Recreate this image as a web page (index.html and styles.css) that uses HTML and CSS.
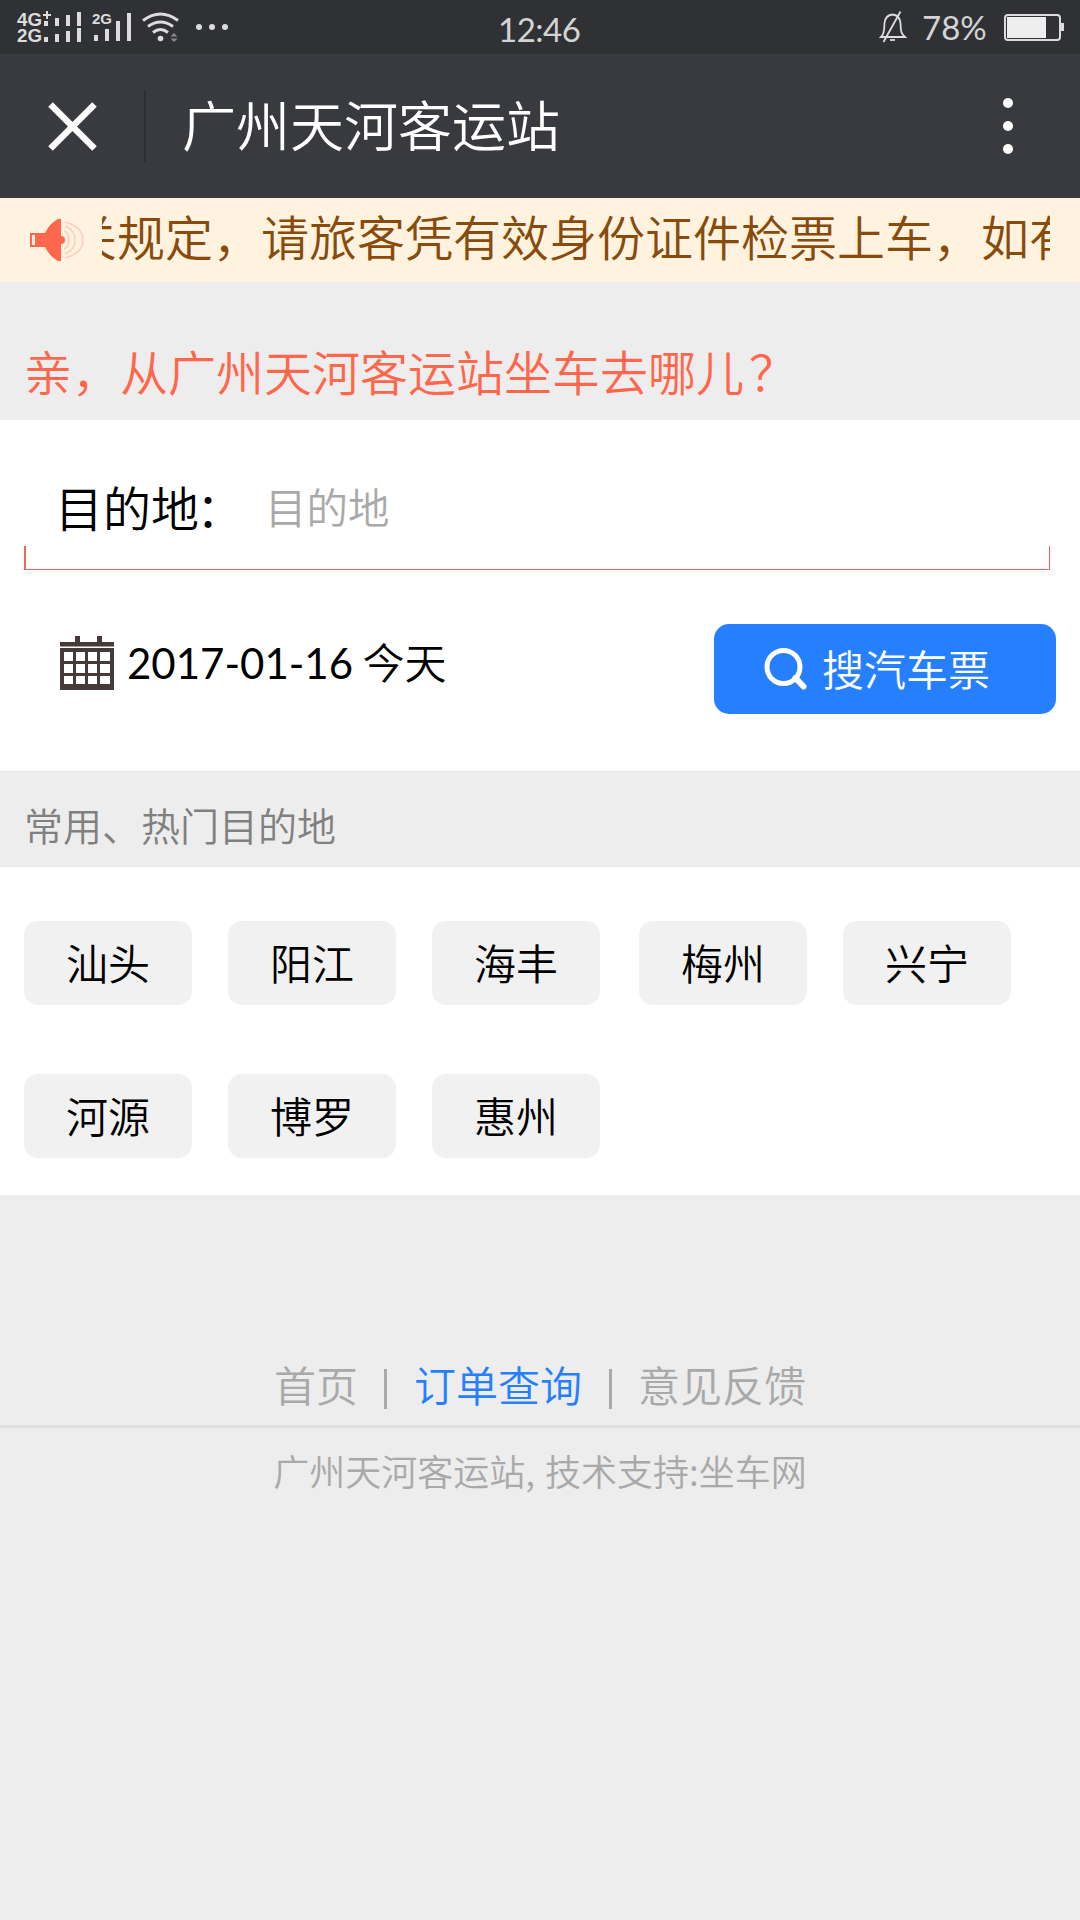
FILE: index.html
```html
<!DOCTYPE html>
<html lang="zh-CN">
  <head>
    <meta charset="utf-8">
    <title>广州天河客运站</title>
    <link rel="stylesheet" href="styles.css">
  </head>
  <body>
    <div class="status-bar">
      <svg class="signal" width="196" height="54" viewBox="0 0 196 54" fill="#dcdcdc">
        <g font-family="Liberation Sans" font-weight="bold">
          <text x="17" y="26" font-size="18" textLength="25" lengthAdjust="spacingAndGlyphs">4G</text>
          <text x="17" y="42" font-size="18" textLength="25" lengthAdjust="spacingAndGlyphs">2G</text>
          <text x="92" y="24" font-size="15" textLength="20" lengthAdjust="spacingAndGlyphs">2G</text>
        </g>
        <path d="M43 15h8M47 11v8" stroke="#dcdcdc" stroke-width="2"/>
        <path d="M44 21h4v5h-4zM55 18h4v8h-4zM66 15h4v11h-4zM77 12h4v14h-4zM44 37h4v5h-4zM55 34h4v8h-4zM66 31h4v11h-4zM77 28h4v14h-4z"/>
        <path d="M94 35h4v6h-4zM105 29h4v12h-4zM116 21h4v20h-4zM127 13h4v28h-4z"/>
        <g fill="none" stroke="#dcdcdc" stroke-width="3">
          <path d="M143 20.500q17.500-13 35 0M148 26.500q12.500-9 25 0M153 32.500q7.500-6 15 0"/>
        </g>
        <circle cx="160.500" cy="38.500" r="2.800"/>
        <path d="M170.500 36.500h7l-3.500-3.500zM170.500 38.500h7l-3.500 3.500z" fill="#8a8a8c"/>
      </svg>
      <div class="more"><i></i><i></i><i></i></div>
      <span class="time">12:46</span>
      <svg class="bell" width="28" height="34" viewBox="0 0 28 34" fill="none" stroke="#dcdcdc" stroke-width="1.800">
        <path d="M2 27c4-4 3-8 3.500-14Q6.500 5 13.500 4.500Q20.500 5 21.500 13c.5 6-.5 10 4.500 14z"/>
        <path d="M4.500 32L21.500 1.500"/>
        <path d="M11 30h5"/>
      </svg>
      <span class="percent">78%</span>
      <div class="battery"><div class="level"></div></div>
      <div class="battery-tip"></div>
    </div>

    <div class="header">
      <svg class="close" width="49" height="49" viewBox="0 0 49 49" stroke="#fff" stroke-width="6.500">
        <path d="M2.500 2.500L46.500 46.500M46.500 2.500L2.500 46.500"/>
      </svg>
      <div class="divider"></div>
      <h1>广州天河客运站</h1>
      <div class="menu"><i></i><i></i><i></i></div>
    </div>

    <div class="notice">
      <svg width="56" height="44" viewBox="0 0 56 44">
        <path fill="#ff674c" fill-rule="evenodd" d="M0 15h15Q20 5 28 1h3v17a4 4 0 0 1 0 8v17h-3Q20 39 15 29H0zM2 17v10h3V17z"/>
        <g fill="none" stroke="#fbcdc3" stroke-width="1.600">
          <path d="M34 13q5 2 5 9t-5 9M35 8q10 4 10 14t-10 14M35 4q18 5 18 18T35 40"/>
        </g>
      </svg>
      <div class="scroll"><p>关规定，请旅客凭有效身份证件检票上车，如有</p></div>
    </div>

    <h2 class="question">亲，从广州天河客运站坐车去哪儿<span>？</span></h2>

    <div class="search">
      <div class="field">
        <label for="dest">目的地<span>：</span></label>
        <input type="text" id="dest" placeholder="目的地">
      </div>
      <div class="field-line"></div>
      <div class="search-row">
        <svg width="54" height="54" viewBox="0 0 54 54">
          <path fill="#463b39" fill-rule="evenodd" d="M15 0h5v6h17V0h5v6h12v4.500H0V6h15zM0 12h54v42H0zM4 16v9h9v-9zM16 16v9h9v-9zM28 16v9h9v-9zM40 16v9h10v-9zM4 28v9h9v-9zM16 28v9h9v-9zM28 28v9h9v-9zM40 28v9h10v-9zM4 40v8h9v-8zM16 40v8h9v-8zM28 40v8h9v-8zM40 40v8h10v-8z"/>
        </svg>
        <div class="date"><span>2017-01-16</span> 今天</div>
        <button>
          <svg width="44" height="44" viewBox="0 0 44 44" fill="none" stroke="#fff" stroke-width="5">
            <circle cx="20.500" cy="20" r="16.500"/>
            <path d="M32.500 31l8 8.500" stroke-width="6" stroke-linecap="round"/>
          </svg>
          <span>搜汽车票</span>
        </button>
      </div>
    </div>

    <h3 class="section-title">常用、热门目的地</h3>

    <div class="places">
      <a>汕头</a>
      <a>阳江</a>
      <a>海丰</a>
      <a>梅州</a>
      <a>兴宁</a>
      <a>河源</a>
      <a>博罗</a>
      <a>惠州</a>
    </div>

    <div class="footer">
      <div class="links">
        <a>首页</a><i></i><a class="active">订单查询</a><i></i><a>意见反馈</a>
      </div>
      <p>广州天河客运站, 技术支持:坐车网</p>
    </div>
  </body>
</html>
```
FILE: styles.css
```css
* {
  box-sizing: border-box;
}

body {
  margin: 0;
  min-height: 1920px;
  background-color: #ededed;
  color: #000;
  font-family: "Noto Sans CJK SC", sans-serif;
  font-weight: 350;
}

h1, h2, h3, p {
  margin: 0;
  font-weight: 350;
}

svg {
  display: block;
  flex: none;
}

.status-bar {
  display: flex;
  align-items: center;
  height: 54px;
  background-color: #303135;
  color: #d4d4d4;
  font-family: Lato, sans-serif;
  font-size: 33px;
  font-weight: 400;
}

.more {
  display: flex;
  gap: 7px;
}

.more i {
  width: 6px;
  height: 6px;
  border-radius: 50%;
  background-color: #dcdcdc;
}

.time {
  width: 84px;
  margin-left: 270px;
  padding-top: 3px;
  letter-spacing: -0.5px;
}

.bell {
  margin-left: auto;
}

.percent {
  width: 66px;
  margin: 0 16px 1px 15px;
}

.battery {
  width: 57px;
  height: 27px;
  padding: 1px;
  border: 2px solid #dcdcdc;
  border-radius: 4px;
}

.level {
  width: 39px;
  height: 21px;
  background-color: #eee;
}

.battery-tip {
  width: 3px;
  height: 8px;
  margin-right: 16px;
  background-color: #dcdcdc;
}

.header {
  display: flex;
  align-items: center;
  height: 144px;
  padding: 0 67px 0 48px;
  background-color: #393a3f;
  color: #fff;
}

.divider {
  width: 2px;
  height: 72px;
  margin: 0 36px 0 47px;
  background-color: #2e2f33;
}

h1 {
  padding-bottom: 4px;
  font-size: 54px;
  line-height: 80px;
}

.menu {
  display: flex;
  flex-direction: column;
  gap: 13px;
  margin-left: auto;
}

.menu i {
  width: 10px;
  height: 10px;
  border-radius: 50%;
  background-color: #fff;
}

.notice {
  display: flex;
  align-items: center;
  height: 84px;
  padding: 0 30px;
  background-color: #fff3df;
  color: #884b0b;
}

.scroll {
  flex: 1;
  margin-left: 16px;
  overflow: hidden;
}

.scroll p {
  margin-left: -33px;
  padding-bottom: 10px;
  font-size: 48px;
  line-height: 74px;
  white-space: nowrap;
}

.question {
  height: 138px;
  padding: 42px 24px 0;
  color: #ff674c;
  font-size: 48px;
  line-height: 92px;
}

.question span {
  margin-left: 5px;
}

.search {
  height: 351px;
  padding: 49px 24px 0;
  background-color: #fff;
}

.field {
  display: flex;
  align-items: center;
  height: 74px;
  padding-left: 31px;
}

label {
  width: 210px;
  font-size: 48px;
}

label span {
  margin-left: -3px;
}

input {
  flex: 1;
  height: 72px;
  padding: 0;
  border: none;
  outline: none;
  font: inherit;
  font-size: 41.5px;
}

input::placeholder {
  color: #a9a9a9;
}

.field-line {
  width: 1026px;
  height: 24px;
  margin-top: 3px;
  border: 1px solid #f0655a;
  border-top: none;
  border-left-width: 2px;
}

.search-row {
  display: flex;
  align-items: center;
  height: 90px;
  margin-top: 54px;
  padding-left: 36px;
}

.search-row > svg {
  margin-bottom: 12px;
}

.date {
  margin: 0 0 18px 13px;
  font-size: 42px;
}

.date span {
  font-family: Lato, sans-serif;
  font-weight: 400;
}

button {
  display: flex;
  align-items: center;
  gap: 15px;
  width: 342px;
  height: 90px;
  margin-left: auto;
  padding: 0 0 0 49px;
  border: none;
  border-radius: 15px;
  background-color: #267fff;
  color: #fff;
  font: inherit;
  font-size: 42px;
}

button span {
  padding-bottom: 4px;
}

.section-title {
  height: 96px;
  padding: 0 24px;
  border-top: 1px solid #e6e6e6;
  border-bottom: 1px solid #e6e6e6;
  color: #808080;
  font-size: 39px;
  line-height: 105px;
}

.places {
  display: grid;
  grid-template-columns: 204px 204px 207px 204px 168px;
  grid-auto-rows: 84px;
  row-gap: 69px;
  height: 328px;
  padding: 54px 24px 0;
  background-color: #fff;
}

.places a {
  width: 168px;
  border-radius: 14px;
  background-color: #f1f1f1;
  font-size: 42px;
  line-height: 81px;
  text-align: center;
}

.footer {
  padding-top: 150px;
  color: #a9a9a9;
  text-align: center;
}

.links {
  display: flex;
  justify-content: center;
  align-items: center;
  height: 83px;
  padding-bottom: 4px;
  border-bottom: 3px solid #e0e0e0;
  font-size: 42px;
}

.links i {
  width: 3px;
  height: 40px;
  margin: 12px 26.5px 0;
  background-color: #a9a9a9;
}

.links .active {
  color: #267fff;
}

.footer p {
  font-size: 36px;
  line-height: 84px;
  word-spacing: 2px;
}
```
